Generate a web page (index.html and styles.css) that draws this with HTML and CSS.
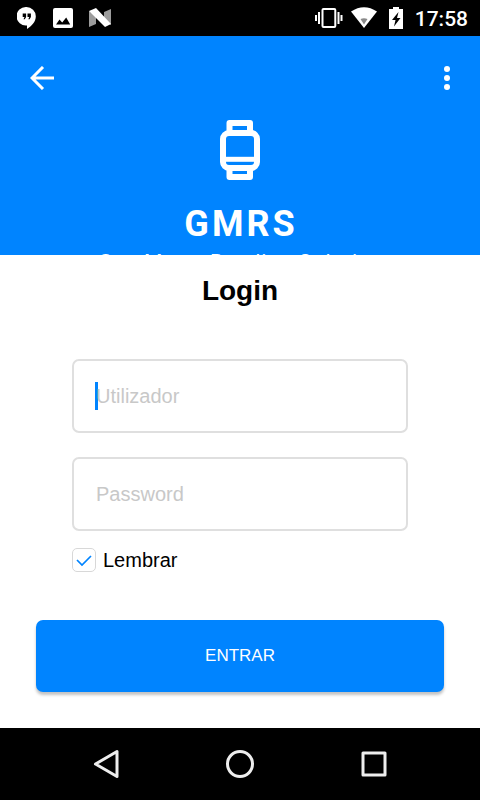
FILE: index.html
```html
<!DOCTYPE html>
<html lang="pt">
<head>
<meta charset="utf-8">
<meta name="viewport" content="width=device-width, initial-scale=1">
<title>GMRS Login</title>
<link rel="stylesheet" href="styles.css">
</head>
<body>
<div class="status">
  <div class="status-left">
    <svg width="20" height="24" viewBox="0 0 20 24"><path fill="#fff" d="M9.500 1a9.300 9.300 0 0 1 9.300 9.300c0 5.500-4 9.800-8.800 12.700v-3.500A9.300 9.300 0 1 1 9.500 1z"/><path d="M5.700 7.500h3.400v3.500L7.800 13.200H6.500l1-2.200H5.700zM10.500 7.500h3.400v3.500l-1.300 2.200h-1.300l1-2.200h-1.800z"/></svg>
    <svg width="20" height="20" viewBox="0 0 20 20"><rect width="20" height="20" rx="2" fill="#fff"/><path d="M3 16.500l3.500-5 2.700 3 4-5L17.200 16.500z"/></svg>
    <svg width="22" height="20" viewBox="0 0 22 20"><path fill="#9c9c9c" d="M0 3l7 5v8L0 19zM22 1l-7 3v8l7 5z"/><path fill="#fff" d="M0 3l7-3 15 16-6 3z"/></svg>
  </div>
  <div class="status-right">
    <svg width="28" height="22" viewBox="0 0 28 22"><path fill="none" stroke="#fff" stroke-width="2" d="M8.500 2h10.800q1 0 1 1v16q0 1-1 1H8.500q-1 0-1-1V3q0-1 1-1zM4 5v12M1 8v6M23.500 5v12M26.500 8v6"/></svg>
    <svg width="26" height="22" viewBox="0 0 26 22"><path fill="#fff" d="M0 4.500Q13-4 26 4.500L13 21z"/><path fill="#8a8a8a" d="M9.500 12q3.500-1.500 7 0L13 17.500z"/></svg>
    <svg class="battery" width="14" height="22" viewBox="0 0 14 22"><path fill="#fff" d="M4 0h6v2h4v20H0V2h4z"/><path d="M9.500 5l-6.500 8h3.500L5 19.500 11.500 11H8z"/></svg>
    <span class="clock">17:58</span>
  </div>
</div>
<header class="hero">
  <div class="toolbar">
    <button class="icon-btn" aria-label="Voltar"><svg width="24" height="24" viewBox="0 0 24 24"><path fill="none" stroke="#fff" stroke-width="3" d="M24 12H2M13 1L2 12l11 11"/></svg></button>
    <button class="icon-btn" aria-label="Menu"><svg width="6" height="24" viewBox="0 0 6 24" fill="#fff"><circle cx="3" cy="3" r="3"/><circle cx="3" cy="12" r="3"/><circle cx="3" cy="21" r="3"/></svg></button>
  </div>
  <svg class="logo" width="40" height="60" viewBox="0 0 40 60"><g fill="none" stroke="#fff" stroke-width="6"><rect x="3" y="13" width="34" height="35" rx="6"/><path stroke-linejoin="round" d="M9.500 14V3h20.500v11M9.500 47v10h20.500V47"/><path stroke-width="5" d="M5 39.300h30"/></g></svg>
  <h1 class="brand">GMRS</h1>
  <p class="tagline">Gas Meter Reading Solution</p>
</header>
<main class="content">
  <h2 class="title">Login</h2>
  <form class="form">
    <div class="field active"><input class="input" type="text" placeholder="Utilizador" aria-label="Utilizador"></div>
    <div class="field"><input class="input" type="password" placeholder="Password" aria-label="Password"></div>
    <label class="remember"><input class="check" type="checkbox" checked>Lembrar</label>
    <button class="submit" type="button">ENTRAR</button>
  </form>
</main>
<nav class="navbar">
  <button class="nav-btn" aria-label="Voltar"><svg width="30" height="30" viewBox="0 0 30 30"><path d="M4.500 15L26 2.500v25z"/></svg></button>
  <button class="nav-btn" aria-label="Início"><svg width="30" height="30" viewBox="0 0 30 30"><circle cx="15" cy="15" r="12.500"/></svg></button>
  <button class="nav-btn" aria-label="Recentes"><svg width="30" height="30" viewBox="0 0 30 30"><rect x="4" y="4" width="22" height="22"/></svg></button>
</nav>
</body>
</html>
```
FILE: styles.css
```css
* { box-sizing: border-box; }
body {
  margin: 0;
  min-height: 100vh;
  display: flex;
  flex-direction: column;
  background: #fff;
  color: #000;
  font-family: "Liberation Sans", Arial, sans-serif;
}
svg { display: block; }
button { font: inherit; border: 0; background: none; padding: 0; }
.status {
  height: 36px;
  padding: 0 12px 0 17px;
  display: flex;
  align-items: center;
  justify-content: space-between;
  background: #000;
  color: #fff;
}
.status-left { display: flex; align-items: center; gap: 16px; }
.status-right { display: flex; align-items: center; gap: 8px; }
.battery { margin: 0 4px; }
.clock { font: 500 21px/36px Roboto, sans-serif; padding-top: 2px; }
.hero {
  height: 219px;
  overflow: hidden;
  background: #0084ff;
  color: #fff;
  text-align: center;
}
.toolbar {
  height: 84px;
  padding: 0 30px;
  display: flex;
  align-items: center;
  justify-content: space-between;
}
.logo { margin: 0 auto; }
.brand { margin: 22px 0 0; padding-left: 2px; font: 700 36px/44px Roboto, sans-serif; letter-spacing: 3px; }
.tagline { margin: 0; padding: 2px 0 0 2px; font: 400 21px/28px Roboto, sans-serif; letter-spacing: 1px; }
.content { flex: 1; padding: 18px 36px 36px; }
.title { margin: 0; font-size: 28px; line-height: 36px; text-align: center; }
.form { padding-top: 50px; display: flex; flex-direction: column; }
.field { position: relative; margin: 0 36px 24px; }
.input {
  display: block;
  width: 100%;
  height: 74px;
  padding: 0 22px;
  border: 2px solid #dfdfdf;
  border-radius: 7px;
  background: #fff;
  font: 20px "Liberation Sans", Arial, sans-serif;
  outline: 0;
}
.input::placeholder { color: #c8c8c8; opacity: 1; }
.active::before {
  content: "";
  position: absolute;
  left: 23px;
  top: 23px;
  width: 3px;
  height: 28px;
  background: #0084ff;
}
.active .input { background: none; position: relative; }
.remember {
  margin: -8px 36px 0;
  display: flex;
  align-items: center;
  gap: 7px;
  font-size: 20px;
  line-height: 26px;
}
.check {
  appearance: none;
  width: 24px;
  height: 24px;
  margin: 0;
  border: 1px solid #d8d8d8;
  border-radius: 5px;
  background: #fff url("data:image/svg+xml,%3Csvg xmlns='http://www.w3.org/2000/svg' viewBox='0 0 22 22'%3E%3Cpath d='M4 11l5 5 9-9' fill='none' stroke='%230084ff' stroke-width='1.700'/%3E%3C/svg%3E") center / 22px 22px;
}
.submit {
  margin-top: 47px;
  height: 72px;
  border-radius: 7px;
  background: #0084ff;
  color: #fff;
  font-size: 17px;
  box-shadow: 0 3px 3px rgba(0, 0, 0, 0.24);
}
.navbar {
  height: 72px;
  padding: 0 39px;
  display: flex;
  align-items: center;
  background: #000;
}
.nav-btn { flex: 1; display: flex; justify-content: center; }
.nav-btn svg { fill: none; stroke: #eee; stroke-width: 3; stroke-linejoin: round; }
```
